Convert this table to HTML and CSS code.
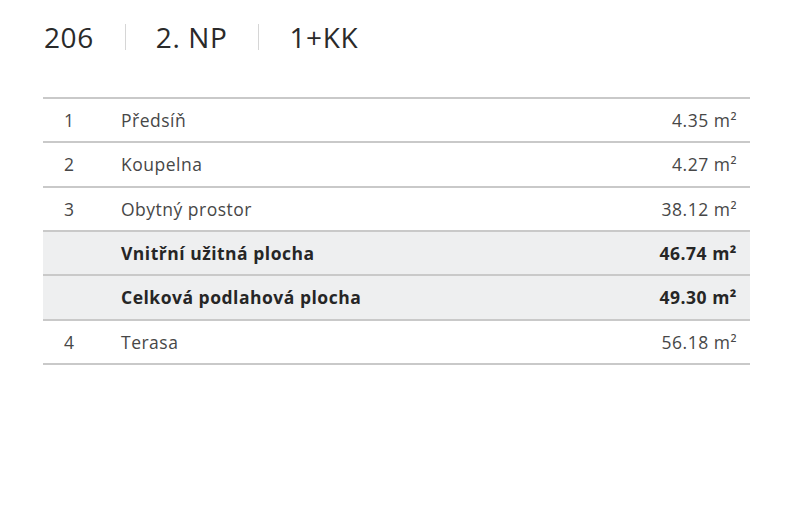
FILE: index.html
```html
<!DOCTYPE html>
<html lang="cs">
<head>
<meta charset="utf-8">
<link rel="stylesheet" href="styles.css">
</head>
<body>
<div class="page">
  <h1 class="title">
    <span>206</span><span class="sep"></span><span>2. NP</span><span class="sep"></span><span>1+KK</span>
  </h1>
  <table class="rooms">
    <tr><td class="num">1</td><td class="name">Předsíň</td><td class="area">4.35 m²</td></tr>
    <tr><td class="num">2</td><td class="name">Koupelna</td><td class="area">4.27 m²</td></tr>
    <tr><td class="num">3</td><td class="name">Obytný prostor</td><td class="area">38.12 m²</td></tr>
    <tr class="total"><td class="num"></td><td class="name">Vnitřní užitná plocha</td><td class="area">46.74 m²</td></tr>
    <tr class="total"><td class="num"></td><td class="name">Celková podlahová plocha</td><td class="area">49.30 m²</td></tr>
    <tr><td class="num">4</td><td class="name">Terasa</td><td class="area">56.18 m²</td></tr>
  </table>
</div>
</body>
</html>
```
FILE: styles.css
```css
html, body {
  margin: 0;
  padding: 0;
  background: #fff;
}
body {
  font-family: "Open Sans", "Liberation Sans", sans-serif;
  color: #474747;
}
.page {
  padding: 16px 50px 0 43px;
}
.title {
  margin: 0 0 0 1px;
  display: flex;
  align-items: center;
  font-weight: 400;
  font-size: 28px;
  color: #2a2a2a;
  height: 42px;
  letter-spacing: 0.6px;
}
.sep {
  width: 1px;
  height: 26px;
  background: #d6d6d6;
  margin: 0 30px 0 31px;
}
.rooms {
  margin-top: 39px;
  width: 707px;
  border-collapse: collapse;
  border-top: 2px solid #c9c9c9;
}
.rooms td {
  height: 42.33px;
  padding: 0;
  border-bottom: 2px solid #c9c9c9;
  font-size: 17.5px;
  letter-spacing: 0.5px;
  vertical-align: middle;
}
.num {
  width: 78px;
  padding-left: 21px !important;
  box-sizing: border-box;
}
.area {
  text-align: right;
  padding-right: 13px !important;
}
.total td {
  background: #eeeff0;
  font-weight: 700;
  color: #262626;
}
```
